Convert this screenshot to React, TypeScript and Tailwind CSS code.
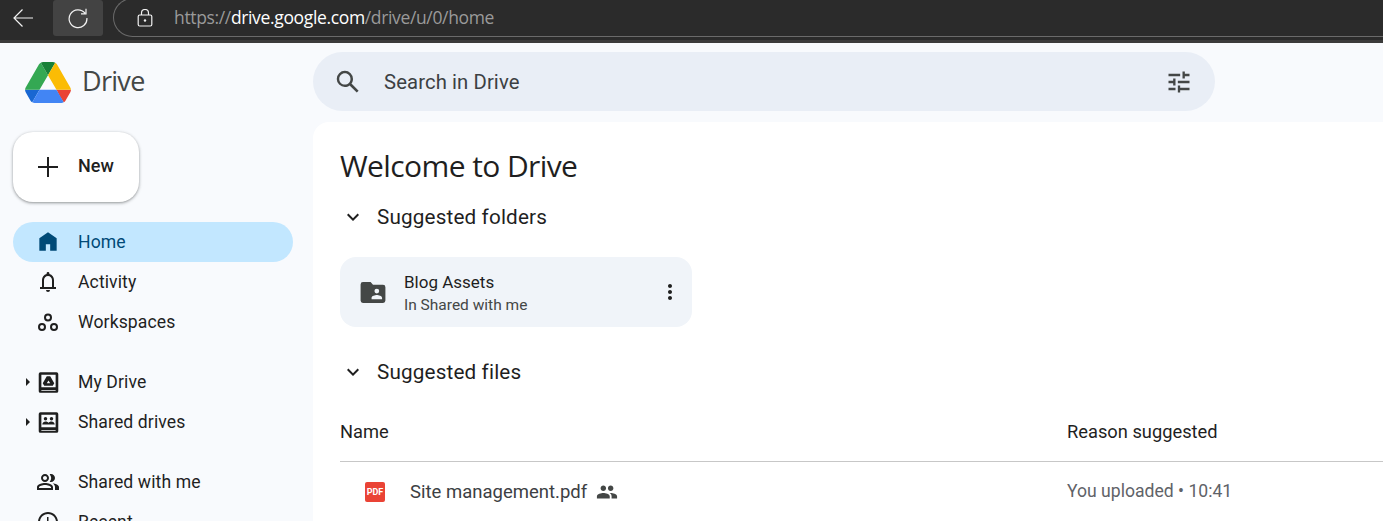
import React from "react";

const F = "font-['Roboto','Noto_Sans',sans-serif]";

function Ic({ d, cls = "", vb = "0 0 24 24" }: { d: string; cls?: string; vb?: string }) {
  return (
    <svg viewBox={vb} className={`shrink-0 ${cls}`} fill="currentColor">
      <path d={d} />
    </svg>
  );
}

function NavRow({ label, icon, active, caret }: { label: string; icon: React.ReactNode; active?: boolean; caret?: boolean }) {
  return (
    <div className={`relative h-10 w-[280px] shrink-0 flex items-center rounded-full pl-[23px] ${active ? "bg-[#c2e7ff] text-[#004a77]" : "text-[#1f1f1f]"}`}>
      {caret && <span className="absolute left-[13px] top-[16px] w-0 h-0 border-y-[4px] border-y-transparent border-l-[4px] border-l-[#1f1f1f]" />}
      <span className={`w-6 h-6 flex items-center justify-center ${active ? "text-[#004a77]" : "text-[#1f1f1f]"}`}>{icon}</span>
      <span className="ml-[18px] pt-[2px] text-[17.6px] tracking-[0.1px] leading-none">{label}</span>
    </div>
  );
}

function DriveLogo() {
  return (
    <svg viewBox="0 0 87.3 78" className="w-[46px] h-[41px]">
      <path d="m6.6 66.85 3.85 6.65c.8 1.4 1.95 2.5 3.3 3.3l13.75-23.8h-27.5c0 1.55.4 3.1 1.2 4.5z" fill="#1967d2" />
      <path d="m43.65 25-13.75-23.8c-1.35.8-2.5 1.9-3.3 3.3l-25.4 44a9.06 9.06 0 0 0 -1.2 4.5h27.5z" fill="#34a853" />
      <path d="m73.55 76.8c1.35-.8 2.5-1.9 3.3-3.3l1.6-2.75 7.65-13.25c.8-1.4 1.2-2.95 1.2-4.5h-27.502l5.852 11.5z" fill="#ea4335" />
      <path d="m43.65 25 13.75-23.8c-1.35-.8-2.9-1.2-4.5-1.2h-18.5c-1.6 0-3.15.45-4.5 1.2z" fill="#188038" />
      <path d="m59.8 53h-32.3l-13.75 23.8c1.35.8 2.9 1.2 4.5 1.2h50.8c1.6 0 3.15-.45 4.5-1.2z" fill="#4285f4" />
      <path d="m73.4 26.5-12.7-22c-.8-1.4-1.95-2.5-3.3-3.3l-13.75 23.8 16.15 28h27.45c0-1.55-.4-3.1-1.2-4.5z" fill="#fbbc04" />
    </svg>
  );
}

const BOOK = "M3 1h14a1.500 1.500 0 0 1 1.500 1.500v15A1.500 1.500 0 0 1 17 19H3a1.500 1.500 0 0 1-1.500-1.500v-15A1.500 1.500 0 0 1 3 1Zm.8 2.300v10.900h12.400V3.300H3.800Zm0 13.400v.6h12.400v-.6H3.800Z";

function MyDriveIcon() {
  return (
    <svg viewBox="0 0 20 20" className="w-[23px] h-[23px] shrink-0" fill="currentColor">
      <path fillRule="evenodd" d={BOOK} />
      <path fillRule="evenodd" d="M8.500 4.600h3L15 10.600l-1.300 2.200H6.300L5 10.600l3.500-6ZM10 8.200l-1.500 2.500h3L10 8.200Z" />
    </svg>
  );
}

function SharedDrivesIcon() {
  return (
    <svg viewBox="0 0 20 20" className="w-[23px] h-[23px] shrink-0" fill="currentColor">
      <path fillRule="evenodd" d={BOOK} />
      <circle cx="7.400" cy="6.800" r="1.500" />
      <circle cx="12.600" cy="6.800" r="1.500" />
      <path d="M4.600 11.800c0-1.600 1.600-2.600 2.800-2.600s2.300.6 2.600 1.200c.4-.6 1.400-1.200 2.600-1.200s2.800 1 2.800 2.600H4.600Z" />
    </svg>
  );
}

function Chevron() {
  return (
    <svg viewBox="0 0 24 24" className="w-6 h-6 text-[#1f1f1f] shrink-0" fill="currentColor">
      <path d="M7.410 8.590 12 13.170l4.590-4.580L18 10l-6 6-6-6z" />
    </svg>
  );
}

export default function App() {
  return (
    <div className={`${F} w-[1383px] h-[521px] overflow-hidden flex flex-col bg-[#f8fafd]`}>
      {/* Browser chrome */}
      <div className="h-[43px] shrink-0 bg-[#2b2b2b] flex flex-col overflow-hidden">
        <div className="h-[40px] flex items-start pl-[12px]">
          <svg viewBox="0 0 22 22" className="w-[22px] h-[22px] mt-[7px] text-[#f2f2f2]" fill="none" stroke="currentColor" strokeWidth="1.2">
            <path d="M21 11H2M10.500 2.500 2 11l8.500 8.500" />
          </svg>
          <div className="ml-[19px] w-[50px] h-[36px] rounded-[3px] bg-[#434343] flex items-center justify-center">
            <svg viewBox="0 0 22 22" className="w-[22px] h-[22px] text-[#f2f2f2]" fill="none" stroke="currentColor" strokeWidth="1.2">
              <path d="M18 6.200A8.900 8.900 0 1 0 19.900 11M19 1.800v5h-5" />
            </svg>
          </div>
          <div className="ml-[10px] flex-1 h-[39px] -mt-[2px] border border-r-0 border-[#6a6a6a] rounded-l-[20px] flex items-center pl-[23px]">
            <svg viewBox="0 0 16 18" className="w-[16px] h-[18px] text-[#f2f2f2]" fill="none" stroke="currentColor" strokeWidth="1.2">
              <rect x="1.200" y="6" width="13.600" height="11" rx="1.500" />
              <path d="M4.500 6V4a3.500 3.500 0 0 1 7 0v2" />
              <circle cx="8" cy="11.500" r="1.200" fill="currentColor" stroke="none" />
            </svg>
            <span className="ml-[21px] text-[17.5px] leading-none text-[#9a9a9a] font-['Open_Sans',sans-serif] tracking-[-0.35px]">
              https://<span className="text-white">drive.google.com</span>/drive/u/0/home
            </span>
          </div>
        </div>
        <div className="h-[3px] bg-[#3b3b3b]" />
      </div>

      {/* Header */}
      <div className="h-[79px] shrink-0 flex items-center">
        <div className="w-[313px] pl-[25px] flex items-center">
          <DriveLogo />
          <span className="ml-[11px] -mt-[4px] text-[27px] leading-none text-[#444746] font-['Open_Sans',sans-serif] tracking-[-0.7px]">Drive</span>
        </div>
        <div className="w-[902px] h-[59px] -mt-[2px] rounded-full bg-[#e9eef6] flex items-center pl-[20px] pr-[23px] text-[#1f1f1f]">
          <svg viewBox="0 0 24 24" className="w-[30px] h-[30px] text-[#444746] shrink-0" fill="currentColor">
            <path d="M20.490 19l-5.730-5.730C15.530 12.200 16 10.910 16 9.500A6.500 6.500 0 1 0 9.500 16c1.410 0 2.700-.47 3.770-1.240L19 20.490 20.490 19zM5 9.500C5 7.010 7.010 5 9.500 5S14 7.010 14 9.500 11.990 14 9.500 14 5 11.990 5 9.500z" />
          </svg>
          <span className="ml-[21px] pt-[2px] text-[20.3px] leading-none tracking-[0.1px] text-[#3c4043]">Search in Drive</span>
          <svg viewBox="0 0 24 24" className="ml-auto w-[28px] h-[28px] -mr-[1px] text-[#444746]" fill="currentColor">
            <path d="M3 17v2h6v-2H3zM3 5v2h10V5H3zm10 16v-2h8v-2h-8v-2h-2v6h2zM7 9v2H3v2h4v2h2V9H7zm14 4v-2H11v2h10zm-6-4h2V7h4V5h-4V3h-2v6z" />
          </svg>
        </div>
      </div>

      {/* Body */}
      <div className="flex-1 flex min-h-0">
        <aside className="w-[313px] shrink-0 pl-[13px] pt-[10px] flex flex-col">
          <div className="w-[126px] h-[70px] shrink-0 rounded-[20px] bg-white shadow-[0_1px_3px_1px_rgba(60,64,67,0.2),0_1px_2px_rgba(60,64,67,0.3)] flex items-center pl-[23px] text-[#1f1f1f]">
            <svg viewBox="0 0 24 24" className="w-6 h-6" fill="currentColor">
              <path d="M22 13h-9v9h-2v-9H2v-2h9V2h2v9h9z" />
            </svg>
            <span className="ml-[18px] -mt-[2px] text-[18px] leading-none font-medium">New</span>
          </div>
          <div className="h-5 shrink-0" />
          <NavRow
            active
            label="Home"
            icon={<Ic cls="w-[26px] h-[26px]" d="M12 3 4 8.500V20h6v-6h4v6h6V8.500z" />}
          />
          <NavRow
            label="Activity"
            icon={
              <Ic cls="w-[24px] h-[24px]" d="M4 19v-2h2v-7c0-2.900 1.800-5.400 4.600-6.100V3.400a1.400 1.400 0 0 1 2.800 0v.5C16.200 4.600 18 7.100 18 10v7h2v2H4Zm4-2h8v-7c0-2.200-1.800-4-4-4s-4 1.800-4 4v7Zm4 5a2 2 0 0 1-2-2h4a2 2 0 0 1-2 2Z" />
            }
          />
          <NavRow
            label="Workspaces"
            icon={
              <svg viewBox="0 0 24 24" className="w-[24px] h-[24px]" fill="none" stroke="currentColor" strokeWidth="2">
                <circle cx="12" cy="7.500" r="3" />
                <circle cx="6" cy="17" r="3" />
                <circle cx="18" cy="17" r="3" />
              </svg>
            }
          />
          <div className="h-5 shrink-0" />
          <NavRow caret label="My Drive" icon={<MyDriveIcon />} />
          <NavRow caret label="Shared drives" icon={<SharedDrivesIcon />} />
          <div className="h-5 shrink-0" />
          <NavRow
            label="Shared with me"
            icon={
              <Ic
                cls="w-[24px] h-[24px]"
                d="M16.670 13.130C18.040 14.060 19 15.320 19 17v3h4v-3c0-2.180-3.570-3.470-6.330-3.870zM9 12c2.210 0 4-1.790 4-4s-1.790-4-4-4-4 1.790-4 4 1.790 4 4 4zm0-6c1.100 0 2 .9 2 2s-.9 2-2 2-2-.9-2-2 .9-2 2-2zm6 6c2.210 0 4-1.790 4-4s-1.790-4-4-4c-.47 0-.91.1-1.330.24a5.980 5.980 0 0 1 0 7.520c.42.14.86.24 1.330.24zM9 13c-2.670 0-8 1.340-8 4v3h16v-3c0-2.660-5.330-4-8-4zm6 5H3v-.99C3.200 16.290 6.300 15 9 15s5.800 1.290 6 2v1z"
              />
            }
          />
          <NavRow
            label="Recent"
            icon={
              <Ic
                cls="w-[24px] h-[24px]"
                d="M11.990 2C6.470 2 2 6.480 2 12s4.470 10 9.990 10C17.520 22 22 17.520 22 12S17.520 2 11.990 2zM12 20c-4.420 0-8-3.580-8-8s3.580-8 8-8 8 3.580 8 8-3.580 8-8 8zm.5-13H11v6l5.250 3.150.75-1.230-4.500-2.670z"
              />
            }
          />
        </aside>

        <main className="flex-1 min-w-0 bg-white rounded-tl-[16px] pl-[27px] flex flex-col">
          <h1 className="mt-[26px] text-[30px] leading-[36px] font-normal text-[#1f1f1f] font-['Open_Sans',sans-serif] tracking-[-0.6px]">Welcome to Drive</h1>

          <div className="mt-[21px] h-6 flex items-center pl-[1px]">
            <Chevron />
            <span className="ml-[12px] text-[20.7px] leading-none text-[#1f1f1f] tracking-[0.15px]">Suggested folders</span>
          </div>

          <div className="mt-[28px] w-[352px] h-[70px] shrink-0 rounded-[16px] bg-[#f0f4f9] flex items-center pl-[20px]">
            <svg viewBox="0 0 26 22" className="w-[26px] h-[21px] text-[#444746]" fill="currentColor">
              <path fillRule="evenodd" d="M2.500 0h8l2.500 3h10.500A2.500 2.500 0 0 1 26 5.500v14a2.500 2.500 0 0 1-2.500 2.500h-21A2.500 2.500 0 0 1 0 19.500v-17A2.500 2.500 0 0 1 2.500 0ZM17 7a2.500 2.500 0 1 0 0 5 2.500 2.500 0 0 0 0-5Zm-5.500 9.500V18h11v-1.500c0-2-3.700-3-5.500-3s-5.500 1-5.500 3Z" />
            </svg>
            <div className="ml-[18px] pt-[4px] flex flex-col">
              <span className="text-[17px] leading-[22px] -mt-[1px] text-[#1f1f1f]">Blog Assets</span>
              <span className="text-[15.5px] leading-[22px] mt-[1px] text-[#444746]">In Shared with me</span>
            </div>
            <svg viewBox="0 0 24 24" className="ml-auto mr-[10px] w-6 h-6 text-[#1f1f1f]" fill="currentColor">
              <path d="M12 8c1.100 0 2-.9 2-2s-.9-2-2-2-2 .9-2 2 .9 2 2 2zm0 2c-1.100 0-2 .9-2 2s.9 2 2 2 2-.9 2-2-.9-2-2-2zm0 6c-1.100 0-2 .9-2 2s.9 2 2 2 2-.9 2-2-.9-2-2-2z" />
            </svg>
          </div>

          <div className="mt-[33px] h-6 flex items-center pl-[1px]">
            <Chevron />
            <span className="ml-[12px] text-[20.7px] leading-none text-[#1f1f1f] tracking-[0.15px]">Suggested files</span>
          </div>

          <div className="mt-[28px] h-[50px] shrink-0 border-b border-[#c7c7c7] flex items-start pt-[9px] text-[18.3px] leading-[22px] text-[#1f1f1f]">
            <span className="w-[727px]">Name</span>
            <span>Reason suggested</span>
          </div>

          <div className="h-[60px] shrink-0 flex items-center">
            <div className="w-[727px] flex items-center pl-[25px]">
              <div className="w-5 h-5 rounded-[2px] bg-[#ea4335] flex items-center justify-center">
                <span className="text-white text-[9px] leading-none font-bold">PDF</span>
              </div>
              <span className="ml-[25px] text-[18.5px] leading-none text-[#3c4043]">Site management.pdf</span>
              <svg viewBox="0 0 24 24" className="ml-[9px] w-[22px] h-[22px] text-[#444746]" fill="currentColor">
                <path d="M16 11c1.660 0 2.990-1.340 2.990-3S17.660 5 16 5c-1.660 0-3 1.340-3 3s1.340 3 3 3zm-8 0c1.660 0 2.990-1.340 2.990-3S9.660 5 8 5C6.340 5 5 6.340 5 8s1.340 3 3 3zm0 2c-2.330 0-7 1.170-7 3.500V19h14v-2.500c0-2.330-4.670-3.500-7-3.500zm8 0c-.290 0-.620.020-.970.050 1.160.840 1.970 1.970 1.970 3.450V19h6v-2.500c0-2.330-4.670-3.500-7-3.500z" />
              </svg>
            </div>
            <span className="text-[17.6px] leading-none text-[#5f6368]">You uploaded • 10:41</span>
          </div>
        </main>
      </div>
    </div>
  );
}
